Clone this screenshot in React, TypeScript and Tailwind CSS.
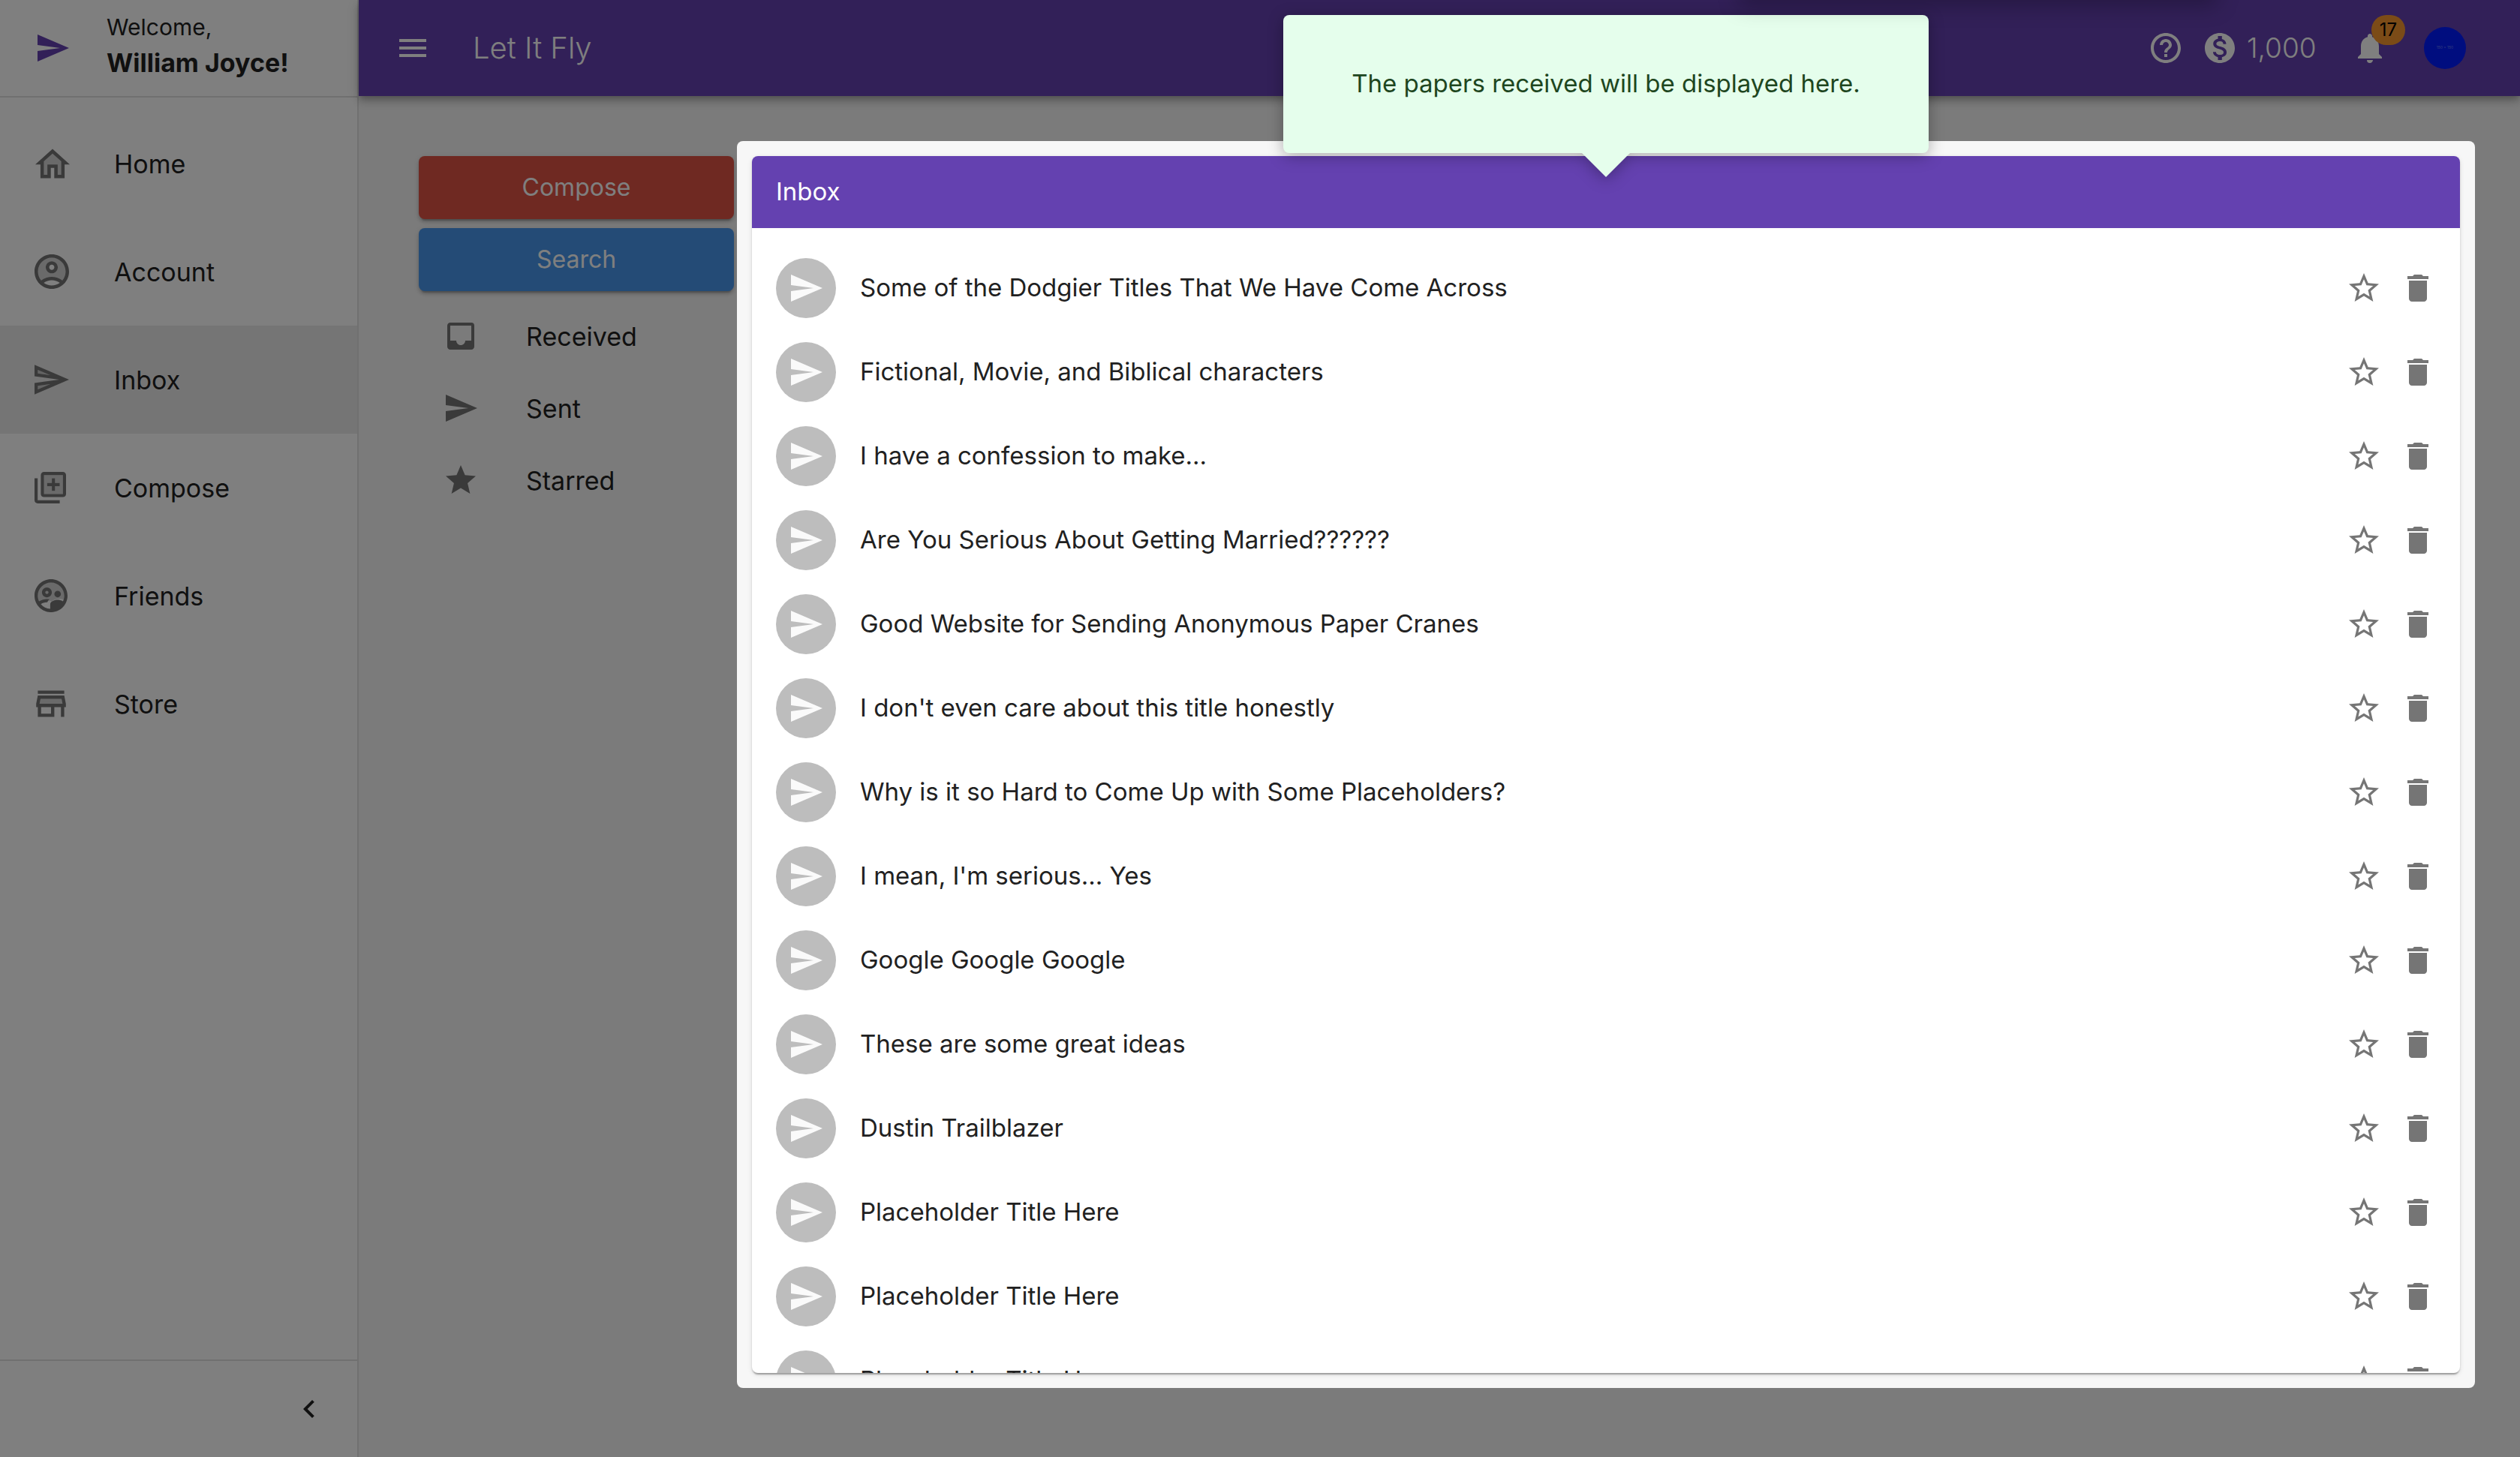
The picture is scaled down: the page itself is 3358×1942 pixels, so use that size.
import type { ReactNode } from "react";
import {
  MdChevronLeft,
  MdDelete,
  MdGrade,
  MdHelpOutline,
  MdInbox,
  MdMenu,
  MdMonetizationOn,
  MdNotifications,
  MdOutlineSupervisedUserCircle,
  MdSend,
  MdStarBorder,
} from "react-icons/md";

const HomeIcon = () => (
  <svg viewBox="2 3 20 17" className="ml-px h-10 w-[46px]" fill="currentColor" aria-hidden="true">
    <path opacity=".3" d="M7 10.19V18h2v-6h6v6h2v-7.81l-5-4.5z" />
    <path d="M12 3L2 12h3v8h6v-6h2v6h6v-8h3L12 3zm5 15h-2v-6H9v6H7v-7.81l5-4.5 5 4.5V18z" />
  </svg>
);

const AccountIcon = () => (
  <svg viewBox="2 2 20 20" className="size-[46px]" fill="currentColor" aria-hidden="true">
    <path
      opacity=".3"
      d="M12 4c-4.42 0-8 3.58-8 8 0 1.95.7 3.73 1.86 5.12C7.55 15.8 9.68 15 12 15s4.45.8 6.14 2.12C19.3 15.73 20 13.95 20 12c0-4.42-3.58-8-8-8zm0 9c-1.93 0-3.5-1.57-3.5-3.5S10.07 6 12 6s3.5 1.57 3.5 3.5S13.93 13 12 13z"
    />
    <path d="M12 2C6.48 2 2 6.48 2 12s4.48 10 10 10 10-4.48 10-10S17.52 2 12 2zM7.35 18.5C8.66 17.56 10.26 17 12 17s3.34.56 4.65 1.5c-1.31.94-2.91 1.5-4.65 1.5s-3.34-.56-4.65-1.5zm10.79-1.38C16.45 15.8 14.32 15 12 15s-4.45.8-6.14 2.12C4.7 15.73 4 13.95 4 12c0-4.42 3.58-8 8-8s8 3.58 8 8c0 1.95-.7 3.73-1.86 5.12z" />
    <path d="M12 6c-1.93 0-3.5 1.57-3.5 3.5S10.07 13 12 13s3.5-1.57 3.5-3.5S13.93 6 12 6zm0 5c-.83 0-1.5-.67-1.5-1.5S11.17 8 12 8s1.5.67 1.5 1.5S12.83 11 12 11z" />
  </svg>
);

const InboxIcon = () => (
  <svg viewBox="2 3 21 18" className="h-10 w-[46px]" fill="currentColor" aria-hidden="true">
    <path opacity=".3" d="M4 8.25l7.51 1-7.5-3.22zm.01 9.72l7.5-3.22-7.51 1z" />
    <path d="M2.01 3L2 10l15 2-15 2 .01 7L23 12 2.01 3zM4 8.25V6.03l7.51 3.22-7.51-1zm.01 9.72v-2.22l7.51-1-7.51 3.22z" />
  </svg>
);

const ComposeIcon = () => (
  <svg viewBox="2 2 20 20" className="size-[42px]" fill="currentColor" aria-hidden="true">
    <path opacity=".3" d="M8 16h12V4H8v12zm2-7h3V6h2v3h3v2h-3v3h-2v-3h-3V9z" />
    <path d="M4 22h14v-2H4V6H2v14c0 1.1.9 2 2 2zM8 18h12c1.1 0 2-.9 2-2V4c0-1.1-.9-2-2-2H8c-1.1 0-2 .9-2 2v12c0 1.1.9 2 2 2zM8 4h12v12H8V4zm7 2h-2v3h-3v2h3v3h2v-3h3V9h-3z" />
  </svg>
);

const FriendsIcon = () => (
  <span className="grid size-11 place-items-center">
    <svg viewBox="2 2 20 20" className="col-start-1 row-start-1 size-11" fill="currentColor" aria-hidden="true">
      <path
        opacity=".3"
        d="M4 12a8 8 0 0 1 16 0c0 .8-.1 1.6-.4 2.4-2.4-1.1-5.6-.7-7.1 1.1-2.2-1.2-5.2-.4-6.6 1.6C4.7 15.7 4 13.9 4 12z"
      />
    </svg>
    <MdOutlineSupervisedUserCircle viewBox="2 2 20 20" className="col-start-1 row-start-1 size-11" />
  </span>
);

const StoreIcon = () => (
  <svg viewBox="2 4 20 16" className="h-9 w-11" fill="currentColor" aria-hidden="true">
    <path opacity=".3" d="M5.64 9l-.6 3h13.92l-.6-3z" />
    <path d="M4 4h16v2H4zM20 7H4l-1 5v2h1v6h10v-6h4v6h2v-6h1v-2l-1-5zm-8 11H6v-4h6v4zm-6.96-6l.6-3h12.72l.6 3H5.04z" />
  </svg>
);

const nav: { label: string; icon: ReactNode; active?: boolean }[] = [
  { label: "Home", icon: <HomeIcon /> },
  { label: "Account", icon: <AccountIcon /> },
  { label: "Inbox", icon: <InboxIcon />, active: true },
  { label: "Compose", icon: <ComposeIcon /> },
  { label: "Friends", icon: <FriendsIcon /> },
  { label: "Store", icon: <StoreIcon /> },
];

const folders = [
  { label: "Received", icon: <MdInbox className="size-12" /> },
  { label: "Sent", icon: <MdSend className="size-12" /> },
  { label: "Starred", icon: <MdGrade className="size-12" /> },
];

const papers = [
  "Some of the Dodgier Titles That We Have Come Across",
  "Fictional, Movie, and Biblical characters",
  "I have a confession to make...",
  "Are You Serious About Getting Married??????",
  "Good Website for Sending Anonymous Paper Cranes",
  "I don't even care about this title honestly",
  "Why is it so Hard to Come Up with Some Placeholders?",
  "I mean, I'm serious... Yes",
  "Google Google Google",
  "These are some great ideas",
  "Dustin Trailblazer",
  "Placeholder Title Here",
  "Placeholder Title Here",
  "Placeholder Title Here",
];

function Sidebar() {
  return (
    <aside className="flex w-[478px] shrink-0 flex-col border-r-2 border-[#e0e0e0] bg-white text-[34px]">
      <div className="flex h-[130px] shrink-0 items-center border-b-2 border-[#e0e0e0] pl-[46px]">
        <MdSend className="size-12 text-[#6441b0]" />
        <div className="ml-12 pb-1">
          <p className="text-[30px] leading-[44px]">Welcome,</p>
          <p className="leading-[52px] font-bold">William Joyce!</p>
        </div>
      </div>
      <nav className="flex-1 pt-4">
        {nav.map((item) => (
          <a
            key={item.label}
            href="#"
            aria-current={item.active ? "page" : undefined}
            className={`flex h-36 items-center pl-[46px] ${item.active ? "bg-[#ebebeb]" : ""}`}
          >
            <span className="w-[106px] text-[#757575]">{item.icon}</span>
            <span>{item.label}</span>
          </a>
        ))}
      </nav>
      <div className="flex h-[130px] shrink-0 items-center justify-end border-t-2 border-[#e0e0e0] pr-10">
        <button type="button" aria-label="Collapse sidebar">
          <MdChevronLeft className="size-12" />
        </button>
      </div>
    </aside>
  );
}

function TopBar() {
  return (
    <header className="relative z-10 flex h-32 shrink-0 items-center bg-[#6441b0] px-12 text-[40px] font-light text-white shadow-[0_4px_8px_-2px_rgba(0,0,0,0.2),0_8px_10px_rgba(0,0,0,0.14),0_2px_20px_rgba(0,0,0,0.12)]">
      <button type="button" aria-label="Menu">
        <MdMenu className="size-12" />
      </button>
      <h1 className="ml-14">Let It Fly</h1>
      <div className="ml-auto flex items-center pr-6">
        <button type="button" aria-label="Help">
          <MdHelpOutline className="size-12" />
        </button>
        <span className="ml-6 flex w-[200px] items-center gap-3 text-[37px]">
          <MdMonetizationOn className="size-12" />
          1,000
        </span>
        <button type="button" aria-label="Notifications" className="relative">
          <MdNotifications className="size-12" />
          <span className="absolute -top-5 left-[26px] flex h-10 w-[45px] items-center justify-center rounded-full bg-[#f7972e] text-2xl font-normal text-black">
            17
          </span>
        </button>
        <button
          type="button"
          aria-label="Profile"
          className="ml-12 flex size-14 items-center justify-center rounded-full bg-[#001aff] text-[5px] font-normal text-white/40"
        >
          150 x 150
        </button>
      </div>
    </header>
  );
}

function MailMenu() {
  const button =
    "h-[84px] rounded-lg text-[32px] text-white shadow-[0_6px_2px_-4px_rgba(0,0,0,0.2),0_4px_4px_rgba(0,0,0,0.14),0_2px_10px_rgba(0,0,0,0.12)]";
  return (
    <div className="flex w-[420px] shrink-0 flex-col gap-3">
      <button type="button" className={`${button} bg-[#de5244]`}>
        Compose
      </button>
      <button type="button" className={`${button} bg-[#4896ec]`}>
        Search
      </button>
      <ul className="text-[34px]">
        {folders.map((f) => (
          <li key={f.label}>
            <a href="#" className="flex h-24 items-center pl-8">
              <span className="w-[111px] text-[#757575]">{f.icon}</span>
              {f.label}
            </a>
          </li>
        ))}
      </ul>
    </div>
  );
}

function Tooltip() {
  return (
    <div
      role="tooltip"
      className="absolute bottom-full left-1/2 mb-1 flex h-[184px] w-[860px] -translate-x-1/2 items-center justify-center rounded-lg bg-[#e5feec] text-[#1e4620] drop-shadow-[0_4px_10px_rgba(0,0,0,0.3)]"
    >
      The papers received will be displayed here.
      <span className="absolute top-full left-1/2 h-8 w-16 -translate-x-1/2 bg-[#e5feec] [clip-path:polygon(0_0,100%_0,50%_100%)]" />
    </div>
  );
}

function InboxCard() {
  return (
    <section className="relative z-20 flex min-w-0 flex-1 flex-col">
      <div className="absolute -inset-5 rounded-lg bg-[#f7f7f7] shadow-[0_0_0_5000px_rgba(0,0,0,0.5)]" />
      <div className="relative flex min-h-0 flex-1 flex-col overflow-hidden rounded-lg bg-white shadow-[0_4px_2px_-2px_rgba(0,0,0,0.2),0_2px_2px_rgba(0,0,0,0.14),0_2px_6px_rgba(0,0,0,0.12)]">
        <h2 className="flex h-24 shrink-0 items-center bg-[#6441b0] px-8 text-white">Inbox</h2>
        <ul className="min-h-0 flex-1 overflow-hidden pt-6">
          {papers.map((title, i) => (
            <li key={i} className="flex h-28 items-center px-8">
              <span className="flex size-20 items-center justify-center rounded-full bg-[#bdbdbd] text-[#fafafa]">
                <MdSend className="size-12" />
              </span>
              <a href="#" className="ml-8 flex-1">
                {title}
              </a>
              <div className="flex gap-6 text-[#757575]">
                <button type="button" aria-label="Star">
                  <MdStarBorder className="size-12" />
                </button>
                <button type="button" aria-label="Delete">
                  <MdDelete className="size-12" />
                </button>
              </div>
            </li>
          ))}
        </ul>
      </div>
      <Tooltip />
    </section>
  );
}

export default function App() {
  return (
    <div className="relative flex h-screen overflow-hidden bg-[#f7f7f7] font-['Inter',sans-serif] text-[33px] text-[#212121]">
      <Sidebar />
      <div className="flex min-w-0 flex-1 flex-col">
        <TopBar />
        <main className="flex min-h-0 flex-1 gap-6 px-20 pt-20 pb-28">
          <MailMenu />
          <InboxCard />
        </main>
      </div>
      <div className="pointer-events-none absolute bottom-full left-[69%] z-30 h-10 w-[19%] shadow-[0_8px_28px_rgba(0,0,0,0.25)]" />
    </div>
  );
}
